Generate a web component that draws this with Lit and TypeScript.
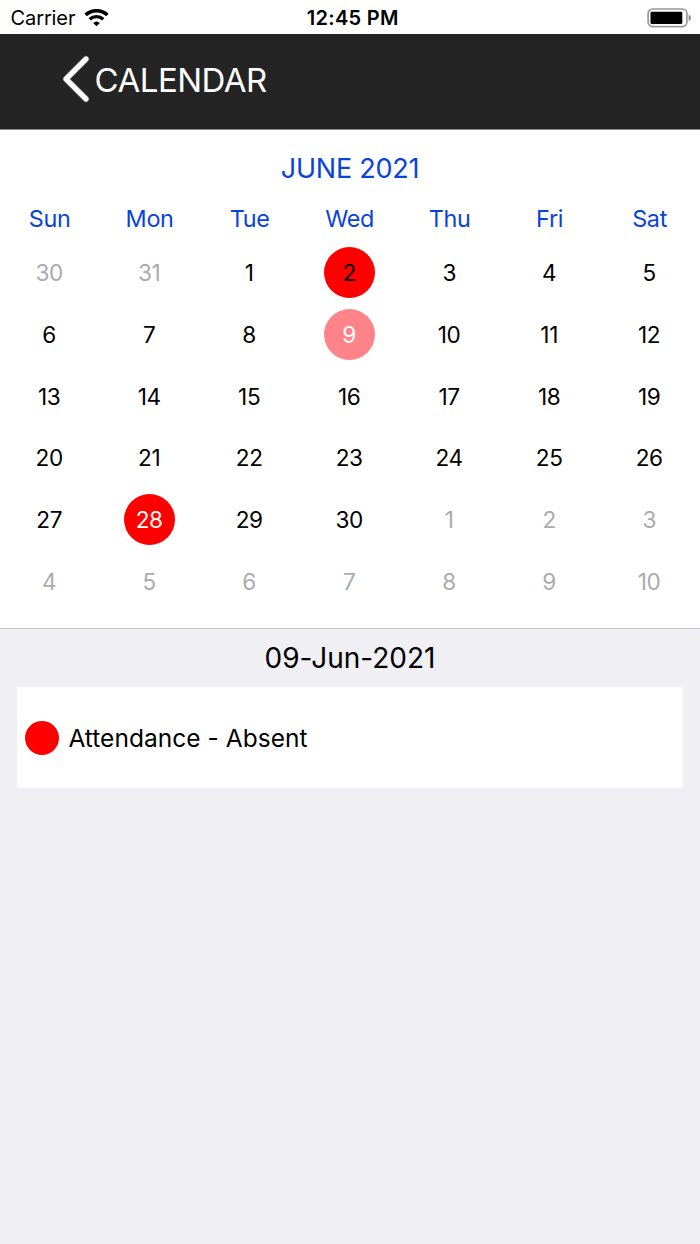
import { LitElement, html, css, svg } from "lit";
import { customElement } from "lit/decorators.js";
import { classMap } from "lit/directives/class-map.js";

interface Day {
  label: number;
  muted: boolean;
  kind: string;
}

const WEEKDAYS = ["Sun", "Mon", "Tue", "Wed", "Thu", "Fri", "Sat"];
const MARKS: Record<number, string> = { 2: "event", 9: "selected", 28: "today" };

function buildDays(): Day[] {
  const days: Day[] = [];
  for (const n of [30, 31]) days.push({ label: n, muted: true, kind: "" });
  for (let n = 1; n <= 30; n++) days.push({ label: n, muted: false, kind: MARKS[n] ?? "" });
  for (let n = 1; n <= 10; n++) days.push({ label: n, muted: true, kind: "" });
  return days;
}

@customElement("status-bar")
export class StatusBar extends LitElement {
  static styles = css`
    :host {
      display: grid;
      grid-template-columns: 1fr auto 1fr;
      align-items: center;
      height: 34px;
      padding: 0 9px 0 10.5px;
      box-sizing: border-box;
      background: #fff;
      color: #000;
    }
    .carrier { display: flex; align-items: center; gap: 9px; font-size: 20px; line-height: 34px; letter-spacing: -0.1px; padding-top: 1px; }
    .time { font-size: 20px; font-weight: 600; line-height: 34px; letter-spacing: 0.3px; padding: 1px 0 0 4px; }
    .battery { justify-self: end; display: block; }
    .wifi { display: block; margin-top: -1px; }
  `;
  render() {
    return html`
      <div class="carrier">
        <span>Carrier</span>
        <svg class="wifi" width="25" height="18" viewBox="0 0 25 18">
          ${svg`
            <path d="M1.6 6 A16 16 0 0 1 23.4 6" fill="none" stroke="#000" stroke-width="3.6"/>
            <path d="M5.7 10.3 A10 10 0 0 1 19.3 10.3" fill="none" stroke="#000" stroke-width="3.4"/>
            <path d="M12.5 17.2 L9.2 14 A4.8 4.8 0 0 1 15.8 14 Z"/>`}
        </svg>
      </div>
      <div class="time">12:45 PM</div>
      <svg class="battery" width="44" height="20" viewBox="0 0 44 20">
        <rect x="1.1" y="1" width="38.8" height="17.6" rx="4.6" fill="#fff" stroke="#999" stroke-width="1.7"/>
        <rect x="3.5" y="3.7" width="31.8" height="12.4" rx="1.4"/>
        <path d="M41.6 6.6 Q44 8 44 10 Q44 12 41.6 13.2 Z" fill="#8c8c8c"/>
      </svg>
    `;
  }
}

@customElement("nav-header")
export class NavHeader extends LitElement {
  static styles = css`
    :host {
      display: flex;
      align-items: center;
      height: 96px;
      box-sizing: border-box;
      padding: 0 0 5px 62px;
      background: #242424;
      border-bottom: 1px solid #8d8a89;
      color: #fff;
    }
    .back { display: block; flex: none; }
    .title { font-size: 33px; line-height: 40px; letter-spacing: -0.5px; margin-left: 4.5px; padding-top: 1px; }
  `;
  render() {
    return html`
      <svg class="back" width="28" height="48" viewBox="0 0 28 48">
        <path d="M24 4 L4 24 L24 44" fill="none" stroke="#888" stroke-width="6.2" stroke-linecap="round" stroke-linejoin="round"/>
        <path d="M24 4 L4 24 L24 44" fill="none" stroke="#fff" stroke-width="4.8" stroke-linecap="round" stroke-linejoin="round"/>
      </svg>
      <span class="title">CALENDAR</span>
    `;
  }
}

@customElement("month-calendar")
export class MonthCalendar extends LitElement {
  static styles = css`
    :host {
      display: block;
      height: 499px;
      box-sizing: border-box;
      padding-top: 19px;
      background: #fff;
      border-bottom: 1px solid #c9c9cb;
    }
    .month { text-align: center; color: #0a43dc; font-size: 27px; line-height: 40px; letter-spacing: -0.25px; }
    .week, .days { display: grid; grid-template-columns: repeat(7, 100px); margin-left: -0.4px; }
    .week { height: 53px; box-sizing: border-box; padding-top: 6px; align-items: center; text-align: center; color: #0a43dc; font-size: 23.4px; letter-spacing: -0.3px; }
    .days { grid-auto-rows: 61.7px; justify-items: center; align-items: center; }
    .day {
      width: 51.3px;
      height: 51.3px;
      border-radius: 50%;
      text-align: center;
      font-size: 22.6px;
      letter-spacing: -0.4px;
      text-indent: -0.9px;
      line-height: 52px;
      color: #000;
    }
    .muted { color: #ababab; }
    .event, .today { background: #f00; }
    .selected { background: #ff8388; }
    .selected, .today { color: #fff; }
  `;
  render() {
    return html`
      <div class="month">JUNE 2021</div>
      <div class="week">${WEEKDAYS.map((d) => html`<span>${d}</span>`)}</div>
      <div class="days">
        ${buildDays().map(
          (d) => html`<div class=${classMap({
            day: true,
            muted: d.muted,
            event: d.kind === "event",
            selected: d.kind === "selected",
            today: d.kind === "today",
          })}>${d.label}</div>`
        )}
      </div>
    `;
  }
}

@customElement("app-root")
export class AppRoot extends LitElement {
  static styles = css`
    :host {
      display: flex;
      flex-direction: column;
      min-height: 1244px;
      background: #efeff4;
      font-family: Inter, "Liberation Sans", sans-serif;
      font-feature-settings: "calt" 0;
      color: #000;
    }
    .date { text-align: center; font-size: 28px; line-height: 40px; padding: 9px 0; height: 58px; box-sizing: border-box; }
    .card {
      display: flex;
      align-items: center;
      gap: 9px;
      height: 101px;
      margin: 0 17px;
      padding-left: 8.4px;
      background: #fff;
      font-size: 24.5px;
      letter-spacing: 0.03px;
    }
    .dot { width: 34px; height: 34px; border-radius: 50%; background: #f00; }
  `;
  render() {
    return html`
      <status-bar></status-bar>
      <nav-header></nav-header>
      <month-calendar></month-calendar>
      <div class="date">09-Jun-2021</div>
      <div class="card"><span class="dot"></span><span>Attendance - Absent</span></div>
    `;
  }
}
